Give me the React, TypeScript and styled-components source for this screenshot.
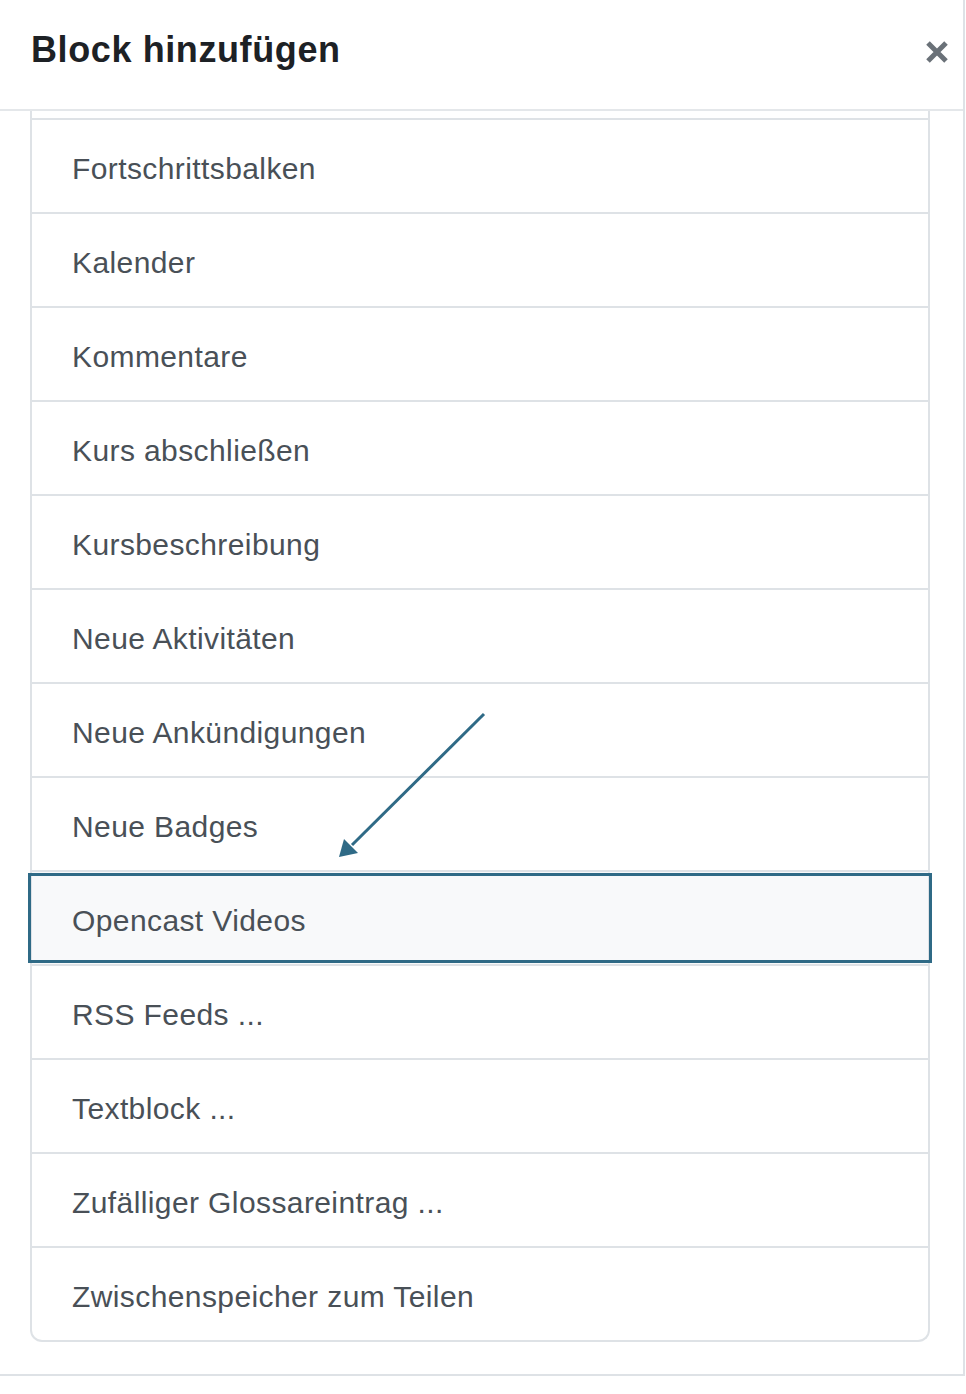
import React from "react";
import styled, { createGlobalStyle } from "styled-components";

const GlobalStyle = createGlobalStyle`
  html, body {
    margin: 0;
    padding: 0;
    background: #ffffff;
  }
  body {
    font-family: "Liberation Sans", Arial, Helvetica, sans-serif;
    -webkit-font-smoothing: antialiased;
  }
  * { box-sizing: border-box; }
`;

const Modal = styled.div`
  position: relative;
  width: 965px;
  background: #ffffff;
  border-right: 2px solid #dee2e6;
  border-bottom: 2px solid #dee2e6;
`;

const Header = styled.div`
  height: 111px;
  display: flex;
  align-items: center;
  justify-content: space-between;
  padding: 0 15px 8px 31px;
  border-bottom: 2px solid #e4e7ea;
`;

const Title = styled.h5`
  margin: 0;
  font-size: 36px;
  line-height: 1.3;
  font-weight: 700;
  color: #1d2125;
  letter-spacing: 0.6px;
`;

const CloseButton = styled.button`
  border: 0;
  background: transparent;
  padding: 0;
  width: 22px;
  height: 22px;
  display: flex;
  align-items: center;
  justify-content: center;
  cursor: pointer;
  margin-top: 2px;
`;

const Body = styled.div`
  height: 1263px;
  overflow: hidden;
  padding: 0 33px 0 30px;
`;

const List = styled.ul`
  list-style: none;
  margin: -85px 0 0 0;
  padding: 0;
`;

const Item = styled.li<{ $active?: boolean; $first?: boolean; $last?: boolean }>`
  position: relative;
  height: 94px;
  display: flex;
  align-items: center;
  padding: 5px 0 0 40px;
  font-size: 30px;
  color: #495057;
  background: ${(p) => (p.$active ? "#f8f9fa" : "#ffffff")};
  border-left: 2px solid #dee2e6;
  border-right: 2px solid #dee2e6;
  border-bottom: 2px solid #dee2e6;
  border-top: ${(p) => (p.$first ? "2px solid #dee2e6" : "0")};
  border-radius: ${(p) => (p.$last ? "0 0 12px 12px" : "0")};
  letter-spacing: 0.4px;

  ${(p) =>
    p.$active &&
    `
    &::after {
      content: "";
      position: absolute;
      top: 1px;
      bottom: 1px;
      left: -4px;
      right: -4px;
      border: 3px solid #2f6a86;
      pointer-events: none;
    }
  `}
`;

const ArrowOverlay = styled.svg`
  position: absolute;
  left: 330px;
  top: 700px;
  pointer-events: none;
`;

const items = [
  "Aktivitäten",
  "Fortschrittsbalken",
  "Kalender",
  "Kommentare",
  "Kurs abschließen",
  "Kursbeschreibung",
  "Neue Aktivitäten",
  "Neue Ankündigungen",
  "Neue Badges",
  "Opencast Videos",
  "RSS Feeds ...",
  "Textblock ...",
  "Zufälliger Glossareintrag ...",
  "Zwischenspeicher zum Teilen",
];

export default function App() {
  return (
    <>
      <GlobalStyle />
      <Modal>
        <Header>
          <Title>Block hinzufügen</Title>
          <CloseButton aria-label="Schließen">
            <svg width="22" height="22" viewBox="0 0 22 22">
              <path
                d="M2 2 L20 20 M20 2 L2 20"
                stroke="#6a7178"
                strokeWidth="5"
                strokeLinecap="butt"
              />
            </svg>
          </CloseButton>
        </Header>
        <Body>
          <List>
            {items.map((name, i) => (
              <Item
                key={name}
                $first={i === 0}
                $last={i === items.length - 1}
                $active={name === "Opencast Videos"}
              >
                {name}
              </Item>
            ))}
          </List>
        </Body>
        <ArrowOverlay width="170" height="170" viewBox="330 700 170 170">
          <line
            x1="484"
            y1="714"
            x2="352"
            y2="845"
            stroke="#2f6a86"
            strokeWidth="3"
          />
          <polygon points="339,857 344,839 358,853" fill="#2f6a86" />
        </ArrowOverlay>
      </Modal>
    </>
  );
}
